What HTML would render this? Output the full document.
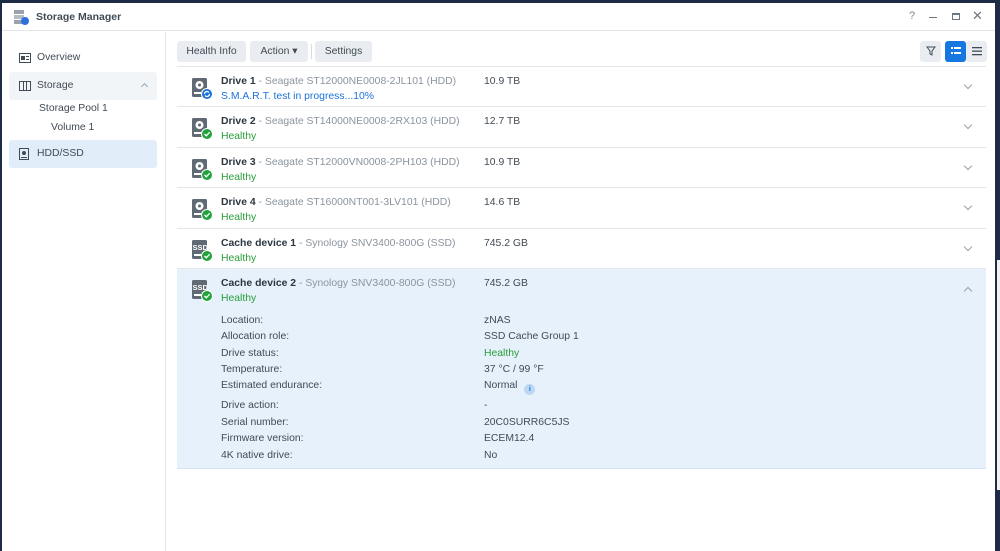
<!DOCTYPE html><html><head><meta charset="utf-8"><style>
*{margin:0;padding:0;box-sizing:border-box}
body{width:1000px;height:551px;overflow:hidden;background:#1d2b44;font-family:"Liberation Sans",sans-serif;font-size:10.4px;color:#414b55;position:relative}
.win{position:absolute;left:2px;top:3px;width:993px;height:548px;background:#fff}
.tb{height:28px;border-bottom:1px solid #e3e7eb;position:relative}
.tb .t{position:absolute;left:34px;top:8px;font-size:10.5px;font-weight:bold;color:#414b55}
.side{position:absolute;left:0;top:29px;width:164px;bottom:0;border-right:1px solid #e3e7eb}
.si{position:absolute;left:7px;width:148px;height:28px;border-radius:3px;color:#414b55}
.si span{position:absolute;left:28px;top:8px}
.btn{position:absolute;top:38px;height:21px;background:#e9edf1;border-radius:3px;color:#414b55;line-height:21px;text-align:center}
.row{position:absolute;left:175px;width:809px;border-bottom:1px solid #e3e7eb}
.row .n{position:absolute;left:44px;top:9px}
.row .n b{color:#2b3640}
.row .n i{font-style:normal;color:#8a949e}
.row .s{position:absolute;left:44px;top:24px;color:#2a9d3a}
.row .z{position:absolute;left:307px;top:9px;color:#414b55}
.row .c{position:absolute;left:788px;top:15px;width:6px;height:6px;border-right:1px solid #97a1ab;border-bottom:1px solid #97a1ab;transform:rotate(45deg)}
.ic{position:absolute;left:14px;top:10px}
.d{position:absolute;left:44px;color:#414b55}
.v{position:absolute;left:307px;color:#414b55}
</style></head><body>
<div class="win">
<div class="tb">
<svg style="position:absolute;left:11px;top:6px" width="16" height="16"><rect x="1" y="1" width="10" height="4" fill="#9aa3ad"/><rect x="1" y="6" width="10" height="4" fill="#b5bdc5"/><rect x="1" y="11" width="10" height="4" fill="#9aa3ad"/><circle cx="12" cy="12" r="4" fill="#2f6fe0"/></svg>
<div class="t">Storage Manager</div>
<div style="position:absolute;left:907px;top:7px;color:#7d8791;font-size:11px">?</div>
<div style="position:absolute;left:927px;top:14px;width:8px;height:1px;background:#6d7781"></div>
<div style="position:absolute;left:950px;top:10px;width:8px;height:7px;border:1px solid #6d7781;border-top-width:2px"></div>
<div style="position:absolute;left:970px;top:5px;color:#6d7781;font-size:13px">✕</div>
</div>
<div class="side">
<div class="si" style="top:12px"><svg style="position:absolute;left:10px;top:9px" width="12" height="10"><rect x=".5" y=".5" width="11" height="9" fill="none" stroke="#414b55"/><rect x="2" y="3" width="4" height="4" fill="#414b55"/><rect x="7" y="3" width="3" height="1" fill="#414b55"/><rect x="7" y="6" width="3" height="1" fill="#414b55"/></svg><span>Overview</span></div>
<div class="si" style="top:40px;background:#f2f5f8"><svg style="position:absolute;left:10px;top:9px" width="12" height="10"><rect x=".5" y=".5" width="11" height="9" fill="none" stroke="#414b55"/><rect x="4" y="1" width="1" height="8" fill="#414b55"/><rect x="7" y="1" width="1" height="8" fill="#414b55"/></svg><span>Storage</span><div style="position:absolute;left:133px;top:12px;width:5px;height:5px;border-left:1px solid #9aa3ad;border-top:1px solid #9aa3ad;transform:rotate(45deg)"></div></div>
<div style="position:absolute;left:37px;top:71px">Storage Pool 1</div>
<div style="position:absolute;left:49px;top:90px">Volume 1</div>
<div class="si" style="top:108px;background:#e1edf9"><svg style="position:absolute;left:10px;top:8px" width="10" height="12"><rect x=".5" y=".5" width="9" height="11" fill="none" stroke="#414b55"/><circle cx="5" cy="5" r="2" fill="#414b55"/><rect x="2" y="9" width="6" height="1" fill="#414b55"/></svg><span>HDD/SSD</span></div>
</div>
<div class="btn" style="left:175px;width:69px">Health Info</div>
<div class="btn" style="left:248px;width:58px">Action ▾</div>
<div style="position:absolute;left:309px;top:41px;width:1px;height:15px;background:#d6dce2"></div>
<div class="btn" style="left:313px;width:57px">Settings</div>
<div class="btn" style="left:918px;width:21px"><svg width="10" height="10" style="margin-top:5px"><path d="M1 1H9L6 5V9L4 8V5Z" fill="none" stroke="#414b55"/></svg></div>
<div class="btn" style="left:943px;width:21px;background:#1677e0"><svg width="10" height="10" style="margin-top:5px"><rect x="0" y="1" width="2" height="2" fill="#fff"/><rect x="3" y="1" width="7" height="2" fill="#fff"/><rect x="0" y="6" width="2" height="2" fill="#fff"/><rect x="3" y="6" width="7" height="2" fill="#fff"/></svg></div>
<div class="btn" style="left:964px;width:21px"><svg width="10" height="10" style="margin-top:5px"><rect x="0" y="1" width="10" height="1.3" fill="#414b55"/><rect x="0" y="4.5" width="10" height="1.3" fill="#414b55"/><rect x="0" y="8" width="10" height="1.3" fill="#414b55"/></svg></div>
<div style="position:absolute;left:175px;top:63px;width:809px;height:1px;background:#e3e7eb"></div>
<div id="rows"></div>
</div>
<div style="position:absolute;left:997px;top:260px;width:3px;height:230px;background:#f0f0f0"></div>
<script>
const hdd=(b)=>`<svg class="ic" width="24" height="24"><rect x="1" y="1" width="15" height="19" rx="1.5" fill="#5f6a75"/><circle cx="8.5" cy="8" r="4" fill="#fff"/><circle cx="8.5" cy="8" r="1.5" fill="#5f6a75"/><rect x="3" y="15" width="8" height="2" fill="#fff"/>${b}</svg>`;
const ssd=(b)=>`<svg class="ic" width="24" height="24"><rect x="1" y="1" width="15" height="19" rx="1.5" fill="#5f6a75"/><text x="1.5" y="11" font-size="7.5" font-weight="bold" fill="#fff" font-family="Liberation Sans">SSD</text><rect x="3" y="15" width="8" height="2" fill="#fff"/>${b}</svg>`;
const ok=`<circle cx="16" cy="17" r="6" fill="#fff"/><circle cx="16" cy="17" r="5" fill="#22a33a"/><path d="M13.5 17L15.3 18.8L18.6 15.3" stroke="#fff" stroke-width="1.4" fill="none"/>`;
const sync=`<circle cx="16" cy="17" r="6" fill="#fff"/><circle cx="16" cy="17" r="5" fill="#1a73d9"/><path d="M13.5 17A2.5 2.5 0 0 1 18 15.5M18.5 17A2.5 2.5 0 0 1 14 18.5" stroke="#fff" stroke-width="1.2" fill="none"/>`;
const R=[["Drive 1","Seagate ST12000NE0008-2JL101 (HDD)","10.9 TB",hdd(sync),'<span style="color:#1a73d9">S.M.A.R.T. test in progress...10%</span>'],
["Drive 2","Seagate ST14000NE0008-2RX103 (HDD)","12.7 TB",hdd(ok),"Healthy"],
["Drive 3","Seagate ST12000VN0008-2PH103 (HDD)","10.9 TB",hdd(ok),"Healthy"],
["Drive 4","Seagate ST16000NT001-3LV101 (HDD)","14.6 TB",hdd(ok),"Healthy"],
["Cache device 1","Synology SNV3400-800G (SSD)","745.2 GB",ssd(ok),"Healthy"],
["Cache device 2","Synology SNV3400-800G (SSD)","745.2 GB",ssd(ok),"Healthy"]];
const tops=[64,104,145,185,226,266];let h='';
R.forEach((r,i)=>{const last=i==5;h+=`<div class="row" style="top:${tops[i]}px;height:${last?200:(tops[i+1]-tops[i])}px;${last?'background:#e6f1fc;border-bottom-color:#d6e4f2':''}">${r[3]}<div class="n"><b>${r[0]}</b><i> - ${r[1]}</i></div><div class="s">${r[4]}</div><div class="z">${r[2]}</div><div class="c" style="${last?'transform:rotate(225deg);top:19px':''}"></div>`;
if(last){const D=[["Location:","zNAS",46],["Allocation role:","SSD Cache Group 1",62],["Drive status:",'<span style="color:#2a9d3a">Healthy</span>',79],["Temperature:","37 °C / 99 °F",95],["Estimated endurance:",'Normal <span style="display:inline-block;width:11px;height:11px;border-radius:50%;background:#bcd8f5;color:#1a73d9;font-size:7px;text-align:center;line-height:11px;font-weight:bold;vertical-align:-3px;margin-left:4px">i</span>',111],["Drive action:","-",131],["Serial number:","20C0SURR6C5JS",148],["Firmware version:","ECEM12.4",164],["4K native drive:","No",181]];
D.forEach(d=>{h+=`<div class="d" style="top:${d[2]}px">${d[0]}</div><div class="v" style="top:${d[2]}px">${d[1]}</div>`});}
h+='</div>';});
document.getElementById('rows').innerHTML=h;
</script>
</body></html>
